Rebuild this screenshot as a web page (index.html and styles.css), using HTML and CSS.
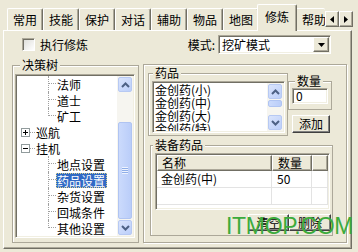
FILE: index.html
```html
<!DOCTYPE html>
<html lang="zh-CN">
<head>
  <meta charset="UTF-8">
  <meta name="viewport" content="width=device-width, initial-scale=1.0">
  <title>修炼</title>
  <link rel="stylesheet" href="styles.css">
</head>
<body>

  <!-- tab strip -->
  <div class="tabstrip">
    <div class="tab">常用</div>
    <div class="tab">技能</div>
    <div class="tab">保护</div>
    <div class="tab">对话</div>
    <div class="tab">辅助</div>
    <div class="tab">物品</div>
    <div class="tab">地图</div>
    <div class="tab active">修炼</div>
    <div class="tab cut">帮助</div>
    <div class="tab-arrows">
      <span class="arrow-btn"><svg width="4" height="7" viewBox="0 0 4 7"><path d="M4 0V7L0 3.5Z"/></svg></span>
      <span class="arrow-btn"><svg width="4" height="7" viewBox="0 0 4 7"><path d="M0 0V7L4 3.5Z"/></svg></span>
    </div>
  </div>

  <div class="panel">
    <div class="toprow">
      <label class="check"><span class="checkbox"></span>执行修炼</label>
      <div class="mode">
        <span>模式:</span>
        <div class="combo">
          <span class="combo-text">挖矿模式</span>
          <span class="combo-btn"><svg width="7" height="4" viewBox="0 0 7 4"><path d="M0 0H7L3.5 4Z"/></svg></span>
        </div>
      </div>
    </div>

    <div class="main">
      <fieldset class="group tree-group">
        <legend>决策树</legend>
        <div class="tree sunken">
          <div class="tree-items">
            <div class="node child"><span class="twig"></span><span class="node-text">法师</span></div>
            <div class="node child"><span class="twig"></span><span class="node-text">道士</span></div>
            <div class="node child"><span class="twig last"></span><span class="node-text">矿工</span></div>
            <div class="node root"><span class="expander plus"></span><span class="stub"></span><span class="node-text">巡航</span></div>
            <div class="node root"><span class="expander minus"></span><span class="stub"></span><span class="node-text">挂机</span></div>
            <div class="node child"><span class="twig"></span><span class="node-text">地点设置</span></div>
            <div class="node child"><span class="twig"></span><span class="node-text selected">药品设置</span></div>
            <div class="node child"><span class="twig"></span><span class="node-text">杂货设置</span></div>
            <div class="node child"><span class="twig"></span><span class="node-text">回城条件</span></div>
            <div class="node child"><span class="twig last"></span><span class="node-text">其他设置</span></div>
          </div>
          <div class="vscroll">
            <span class="sb-btn"><svg width="9" height="6" viewBox="0 0 9 6"><path d="M1 5L4.5 1.5L8 5" fill="none" stroke="#4d6185" stroke-width="2"/></svg></span>
            <div class="sb-track">
              <div class="sb-thumb tree-thumb"><span class="grip"></span></div>
            </div>
            <span class="sb-btn"><svg width="9" height="6" viewBox="0 0 9 6"><path d="M1 1L4.5 4.5L8 1" fill="none" stroke="#4d6185" stroke-width="2"/></svg></span>
          </div>
        </div>
      </fieldset>

      <div class="right-box">
        <div class="drug-row">
          <fieldset class="group drug-group">
            <legend>药品</legend>
            <div class="listbox sunken">
              <div class="lb-items">
                <div>金创药(小)</div>
                <div>金创药(中)</div>
                <div>金创药(大)</div>
                <div>金创药(特)</div>
              </div>
              <div class="vscroll">
                <span class="sb-btn"><svg width="9" height="6" viewBox="0 0 9 6"><path d="M1 5L4.5 1.5L8 5" fill="none" stroke="#4d6185" stroke-width="2"/></svg></span>
                <div class="sb-track">
                  <div class="sb-thumb list-thumb"></div>
                </div>
                <span class="sb-btn"><svg width="9" height="6" viewBox="0 0 9 6"><path d="M1 1L4.5 4.5L8 1" fill="none" stroke="#4d6185" stroke-width="2"/></svg></span>
              </div>
            </div>
          </fieldset>

          <div class="qty-col">
            <fieldset class="group qty-group">
              <legend>数量</legend>
              <div class="qty-input sunken">0</div>
            </fieldset>
            <button class="btn btn-add">添加</button>
          </div>
        </div>

        <fieldset class="group equip-group">
          <legend>装备药品</legend>
          <div class="listview sunken">
            <div class="lv-head">
              <span class="lv-hcell col-name">名称</span>
              <span class="lv-hcell col-qty">数量</span>
              <span class="lv-hcell col-fill"></span>
            </div>
            <div class="lv-row">
              <span class="lv-cell col-name">金创药(中)</span>
              <span class="lv-cell col-qty">50</span>
              <span class="lv-cell col-fill"></span>
            </div>
            <div class="lv-row">
              <span class="lv-cell col-name"></span>
              <span class="lv-cell col-qty"></span>
              <span class="lv-cell col-fill"></span>
            </div>
          </div>
          <div class="lv-buttons">
            <button class="btn btn-clear">清空</button>
            <button class="btn btn-del">删除</button>
          </div>
        </fieldset>
      </div>
    </div>

    <!-- site watermark over the buttons -->
    <div class="watermark">ITMOP.COM</div>
  </div>

</body>
</html>
```

FILE: styles.css
```css
body {
  margin: 0;
  width: 358px;
  height: 252px;
  overflow: hidden;
  background-color: #ece9d8;
  font-family: "Noto Sans CJK SC", "Noto Sans", sans-serif;
  font-size: 12px;
  color: #000;
}

/* tabs */
.tabstrip {
  display: flex;
  align-items: flex-end;
  height: 26px;
  margin: 4px 0 0 7px;
}
.tab {
  box-sizing: border-box;
  width: 36px;
  height: 22px;
  display: flex;
  align-items: center;
  justify-content: center;
  line-height: 14px;
  border-top: 1px solid #fff;
  border-left: 1px solid #fff;
  border-right: 1px solid #716f64;
  box-shadow: inset -1px 0 #aca899;
  border-radius: 2px 2px 0 0;
}
.tab.active {
  position: relative;
  z-index: 1;
  width: 40px;
  height: 27px;
  margin: 0 -2px -1px;
  padding-bottom: 3px;
  background-color: #ece9d8;
}
.tab.cut {
  width: 30px;
  overflow: hidden;
  white-space: nowrap;
  justify-content: flex-start;
  padding-left: 6px;
  border-right: none;
  box-shadow: none;
}
.tab-arrows {
  display: flex;
  align-self: flex-start;
  margin-top: 7px;
}
.arrow-btn {
  box-sizing: border-box;
  width: 14px;
  height: 16px;
  display: flex;
  align-items: center;
  justify-content: center;
  background-color: #ece9d8;
  border: 1px solid;
  border-color: #fff #716f64 #716f64 #fff;
  box-shadow: inset -1px -1px #aca899;
}

/* page */
.panel {
  position: relative;
  box-sizing: border-box;
  width: 349px;
  height: 219px;
  margin-left: 3px;
  padding: 0 4px 0 8px;
  border: 1px solid;
  border-color: #fff #716f64 #716f64 #fff;
  box-shadow: inset -1px -1px #aca899;
}
.toprow {
  display: flex;
  align-items: center;
  height: 27px;
}
.check {
  display: flex;
  align-items: center;
  gap: 5px;
  margin-left: 10px;
  line-height: 14px;
}
.checkbox {
  box-sizing: border-box;
  width: 13px;
  height: 13px;
  background: linear-gradient(135deg, #dcdcd7, #fff);
  border: 1px solid;
  border-color: #aca899 #fff #fff #aca899;
  box-shadow: inset 1px 1px #716f64;
}
.mode {
  display: flex;
  align-items: center;
  gap: 3px;
  margin-left: auto;
  margin-right: 16px;
  line-height: 14px;
}
.sunken {
  box-sizing: border-box;
  border: 1px solid;
  border-color: #aca899 #fff #fff #aca899;
  box-shadow: inset 1px 1px #716f64, inset -1px -1px #f1efe2;
}
.combo {
  box-sizing: border-box;
  width: 113px;
  height: 19px;
  display: flex;
  align-items: center;
  padding: 1px;
  background-color: #fff;
  border: 1px solid;
  border-color: #aca899 #fff #fff #aca899;
  box-shadow: inset 1px 1px #716f64, inset -1px -1px #f1efe2;
}
.combo-text {
  flex: 1;
  padding-left: 2px;
}
.combo-btn {
  box-sizing: border-box;
  width: 16px;
  height: 15px;
  display: flex;
  align-items: center;
  justify-content: center;
  background-color: #ece9d8;
  border: 1px solid;
  border-color: #fff #716f64 #716f64 #fff;
  box-shadow: inset -1px -1px #aca899;
}

/* group boxes */
.main {
  display: flex;
  align-items: flex-start;
}
.group {
  box-sizing: border-box;
  min-width: 0;
  margin: 0;
  border: 1px solid #aca899;
  box-shadow: inset 1px 1px #fff;
}
.group legend {
  padding: 0 2px;
  line-height: 14px;
  background-color: #ece9d8;
}
.tree-group {
  width: 127px;
  height: 185px;
  padding: 0 3px 0 2px;
}
.tree-group legend {
  margin-left: 5px;
}

/* tree view */
.tree {
  display: flex;
  width: 120px;
  height: 164px;
  margin-top: 2px;
  padding: 1px;
  background-color: #fff;
}
.tree-items {
  flex: 1;
  overflow: hidden;
}
.node {
  display: flex;
  align-items: center;
  height: 16px;
  white-space: nowrap;
}
.node.child {
  padding-left: 31px;
}
.node.root {
  padding-left: 4px;
}
.twig {
  width: 7px;
  height: 16px;
  border-left: 1px dotted #a0a0a0;
}
.twig::after {
  content: "";
  display: block;
  margin-top: 7px;
  border-top: 1px dotted #a0a0a0;
}
.twig.last {
  height: 8px;
  align-self: flex-start;
}
.expander {
  box-sizing: border-box;
  width: 9px;
  height: 9px;
  border: 1px solid #919b9c;
  background-color: #fff;
  background-repeat: no-repeat;
}
.expander.minus {
  background-image: linear-gradient(#000, #000);
  background-size: 5px 1px;
  background-position: 1px 3px;
}
.expander.plus {
  background-image: linear-gradient(#000, #000), linear-gradient(#000, #000);
  background-size: 5px 1px, 1px 5px;
  background-position: 1px 3px, 3px 1px;
}
.stub {
  width: 5px;
  border-top: 1px dotted #a0a0a0;
}
.node-text {
  padding: 0 2px 0 1px;
  line-height: 15px;
}
.node-text.selected {
  background-color: #316ac5;
  color: #fff;
  outline: 1px dotted #d8cf8c;
  outline-offset: -1px;
}

/* xp scroll bars */
.vscroll {
  box-sizing: border-box;
  width: 16px;
  display: flex;
  flex-direction: column;
  padding: 1px 0;
  background-color: #f6f5f0;
}
.sb-btn {
  box-sizing: border-box;
  height: 15px;
  margin: 0 1px;
  display: flex;
  align-items: center;
  justify-content: center;
  border: 1px solid #b7c9f3;
  border-radius: 2px;
  background: linear-gradient(135deg, #dae4fc, #bccffa);
}
.sb-track {
  flex: 1;
  display: flex;
  flex-direction: column;
}
.sb-thumb {
  box-sizing: border-box;
  margin: 0 1px;
  display: flex;
  align-items: center;
  justify-content: center;
  border: 1px solid #b0c4f2;
  border-radius: 2px;
  background: linear-gradient(90deg, #cbdafc, #bacdf9);
}
.tree-thumb {
  flex: 1;
  margin-top: 30px;
  margin-bottom: 1px;
}
.list-thumb {
  height: 7px;
  margin-top: 1px;
}
.grip {
  width: 6px;
  height: 7px;
  background: repeating-linear-gradient(#eef3fe 0 1px, #8faee8 1px 2px);
}

/* right side */
.right-box {
  box-sizing: border-box;
  width: 204px;
  height: 179px;
  margin: 6px 0 0 4px;
  padding: 1px 0 0 4px;
  border: 1px solid #aca899;
  box-shadow: inset 1px 1px #fff, 1px 1px #fff;
}
.drug-row {
  display: flex;
  align-items: flex-start;
}
.drug-group {
  width: 140px;
  padding: 0 2px 2px 3px;
}
.drug-group legend {
  margin-left: 1px;
}
.listbox {
  display: flex;
  width: 133px;
  height: 52px;
  margin-top: 1px;
  padding: 1px;
  background-color: #fff;
}
.lb-items {
  flex: 1;
  padding-left: 1px;
  line-height: 13px;
  overflow: hidden;
  white-space: nowrap;
}
.qty-col {
  display: flex;
  flex-direction: column;
  width: 44px;
}
.qty-group {
  width: 44px;
  margin-top: 8px;
  padding: 0 3px 5px 3px;
}
.qty-group legend {
  margin-left: 3px;
}
.qty-input {
  width: 36px;
  height: 16px;
  padding-left: 3px;
  line-height: 14px;
  background-color: #fff;
}
.btn {
  box-sizing: border-box;
  padding: 0;
  font-family: inherit;
  font-size: 12px;
  line-height: 14px;
  color: #000;
  background-color: #ece9d8;
  border: 1px solid;
  border-color: #fff #404040 #404040 #fff;
  box-shadow: inset -1px -1px #808080;
}
.btn-add {
  width: 38px;
  height: 18px;
  margin: 5px 0 0 4px;
}
.equip-group {
  width: 183px;
  margin: 2px 0 0 2px;
  padding: 0 1px 4px 4px;
}
.equip-group legend {
  margin-left: -2px;
}
.listview {
  width: 175px;
  height: 57px;
  margin-top: 1px;
  padding: 1px;
  background-color: #fff;
  overflow: hidden;
}
.lv-head {
  display: flex;
  height: 16px;
}
.lv-hcell {
  box-sizing: border-box;
  height: 16px;
  line-height: 14px;
  background-color: #ece9d8;
  border: 1px solid;
  border-color: #fff #716f64 #716f64 #fff;
  box-shadow: inset -1px -1px #aca899;
}
.lv-row {
  display: flex;
  height: 17px;
}
.lv-cell {
  box-sizing: border-box;
  height: 17px;
  line-height: 16px;
  border-right: 1px solid #e3e3e3;
  border-bottom: 1px solid #e3e3e3;
}
.col-name {
  width: 115px;
  padding-left: 4px;
}
.col-qty {
  width: 40px;
  padding-left: 5px;
}
.col-fill {
  flex: 1;
}
.lv-buttons {
  display: flex;
  justify-content: flex-end;
  margin-top: 4px;
}
.btn-clear {
  width: 41px;
  height: 17px;
}
.btn-del {
  width: 42px;
  height: 17px;
}

.watermark {
  position: absolute;
  left: 222px;
  top: 184px;
  font-family: "Liberation Sans", Arial, sans-serif;
  font-size: 23px;
  line-height: 23px;
  letter-spacing: -0.3px;
  color: #3cab3c;
}
```
